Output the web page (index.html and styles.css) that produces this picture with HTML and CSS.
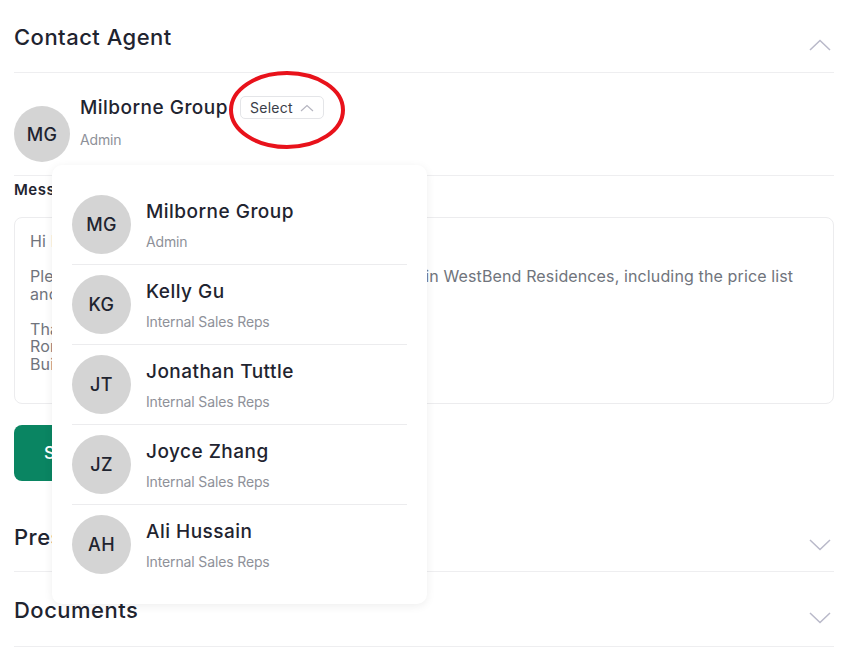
FILE: index.html
```html
<!DOCTYPE html>
<html lang="en">
<head>
<meta charset="utf-8">
<title>Contact Agent</title>
<link rel="stylesheet" href="styles.css">
</head>
<body>
<div class="page">
  <section class="contact">
    <div class="acc-header first">
      <h2 class="acc-title">Contact Agent</h2>
      <svg class="chev" width="22" height="12" viewBox="0 0 22 12"><path d="M1 11 L11 1.5 L21 11" fill="none" stroke="#b9b9c9" stroke-width="1.5"/></svg>
    </div>

    <div class="agent-row">
      <div class="avatar sm">MG</div>
      <div class="agent-info">
        <div class="name-line">
          <span class="agent-name">Milborne Group</span>
          <div class="select-wrap">
            <button class="select-btn">Select
              <svg width="14" height="8" viewBox="0 0 14 8"><path d="M1 7 L7 1.5 L13 7" fill="none" stroke="#b5b5c0" stroke-width="1.2"/></svg>
            </button>
            <svg class="highlight" width="118" height="80" viewBox="0 0 118 80"><ellipse cx="59" cy="40" rx="56" ry="37" fill="none" stroke="#e8121b" stroke-width="4"/></svg>
          </div>
        </div>
        <div class="agent-role">Admin</div>
      </div>

      <div class="dropdown">
        <div class="dd-item">
          <div class="avatar">MG</div>
          <div class="dd-text"><div class="dd-name">Milborne Group</div><div class="dd-role">Admin</div></div>
        </div>
        <div class="dd-item">
          <div class="avatar">KG</div>
          <div class="dd-text"><div class="dd-name">Kelly Gu</div><div class="dd-role">Internal Sales Reps</div></div>
        </div>
        <div class="dd-item">
          <div class="avatar">JT</div>
          <div class="dd-text"><div class="dd-name">Jonathan Tuttle</div><div class="dd-role">Internal Sales Reps</div></div>
        </div>
        <div class="dd-item">
          <div class="avatar">JZ</div>
          <div class="dd-text"><div class="dd-name">Joyce Zhang</div><div class="dd-role">Internal Sales Reps</div></div>
        </div>
        <div class="dd-item">
          <div class="avatar">AH</div>
          <div class="dd-text"><div class="dd-name">Ali Hussain</div><div class="dd-role">Internal Sales Reps</div></div>
        </div>
      </div>
    </div>

    <div class="msg-label">Message</div>
    <div class="msg-box">Hi Milborne Group,

Please send me more information about the homes in WestBend Residences, including the price list
and floor plans for the available units.

Thanks,
Ronald Tan
Buildwell Realty</div>
    <button class="send-btn">Send Message</button>
  </section>

  <section>
    <div class="acc-header">
      <h2 class="acc-title">Presentation</h2>
      <svg class="chev" width="22" height="12" viewBox="0 0 22 12"><path d="M1 1 L11 10.5 L21 1" fill="none" stroke="#b9b9c9" stroke-width="1.5"/></svg>
    </div>
  </section>

  <section>
    <div class="acc-header last">
      <h2 class="acc-title">Documents</h2>
      <svg class="chev" width="22" height="12" viewBox="0 0 22 12"><path d="M1 1 L11 10.5 L21 1" fill="none" stroke="#b9b9c9" stroke-width="1.5"/></svg>
    </div>
  </section>
</div>
</body>
</html>
```

FILE: styles.css
```css
* { box-sizing: border-box; }
html, body { margin: 0; padding: 0; background: #fff; }
body {
  font-family: Inter, "Noto Sans", "Liberation Sans", sans-serif;
  color: #1f2430;
  letter-spacing: 0.03em;
}
.page { padding: 0 17px 0 14px; }

.acc-header {
  display: flex;
  justify-content: space-between;
  align-items: flex-start;
  height: 75px;
  padding-top: 25px;
  border-bottom: 1px solid #eeeef0;
}
.acc-header.first { height: 73px; padding-top: 22px; }
.acc-header.last { padding-top: 23px; }
.acc-title {
  margin: 0;
  font-size: 22px;
  line-height: 30px;
  font-weight: 500;
  color: #1f2430;
}
.chev { margin-top: 17px; margin-right: 3px; }

.agent-row {
  position: relative;
  display: flex;
  align-items: flex-start;
  gap: 10px;
  padding: 23px 0 13px;
  border-bottom: 1px solid #eeeef0;
}
.avatar {
  flex: none;
  width: 59px;
  height: 59px;
  border-radius: 50%;
  background: #d4d4d4;
  display: flex;
  align-items: center;
  justify-content: center;
  font-size: 18px;
  font-weight: 500;
  color: #1f2430;
  letter-spacing: 0.02em;
}
.avatar.sm { width: 56px; height: 56px; margin-top: 10px; }
.name-line { display: flex; align-items: center; gap: 12px; height: 23px; }
.agent-name { font-size: 19px; font-weight: 500; color: #1f2430; }
.agent-role { margin-top: 12px; font-size: 14px; line-height: 17px; color: #8e9199; letter-spacing: -0.01em; }

.select-wrap { position: relative; }
.select-btn {
  display: flex;
  align-items: center;
  gap: 7px;
  height: 23px;
  padding: 0 9px 0 9px;
  font-family: inherit;
  font-size: 14px;
  letter-spacing: 0.02em;
  color: #3a3e48;
  background: #fff;
  border: 1px solid #e4e5e8;
  border-radius: 5px;
}
.highlight {
  position: absolute;
  left: -12px;
  top: -26px;
  pointer-events: none;
}

.dropdown {
  position: absolute;
  left: 38px;
  top: 92px;
  width: 375px;
  padding: 20px 20px 20px;
  background: #fff;
  border-radius: 10px;
  box-shadow: 0 2px 10px rgba(0, 0, 0, 0.07);
  z-index: 10;
}
.dd-item {
  display: flex;
  align-items: flex-start;
  gap: 15px;
  padding: 10px 0;
  border-bottom: 1px solid #ececee;
}
.dd-item:last-child { border-bottom: none; }
.dd-text { padding-top: 4px; }
.dd-name { font-size: 19px; line-height: 26px; font-weight: 500; color: #1f2430; }
.dd-role { margin-top: 8px; font-size: 14px; line-height: 17px; color: #8e9199; letter-spacing: -0.01em; }

.msg-label {
  margin-top: 4px;
  font-size: 15px;
  line-height: 20px;
  font-weight: 600;
  color: #1f2430;
}
.msg-box {
  margin-top: 17px;
  height: 187px;
  padding: 15px 15px 14px;
  border: 1px solid #ececee;
  border-radius: 8px;
  white-space: pre-line;
  font-size: 16px;
  line-height: 17.5px;
  letter-spacing: 0.008em;
  color: #70747c;
}
.send-btn {
  display: block;
  margin-top: 21px;
  margin-bottom: 16px;
  height: 56px;
  padding: 0 30px;
  border: none;
  border-radius: 8px;
  background: #0a8562;
  color: #fff;
  font-family: inherit;
  font-size: 17px;
  font-weight: 500;
}
```
